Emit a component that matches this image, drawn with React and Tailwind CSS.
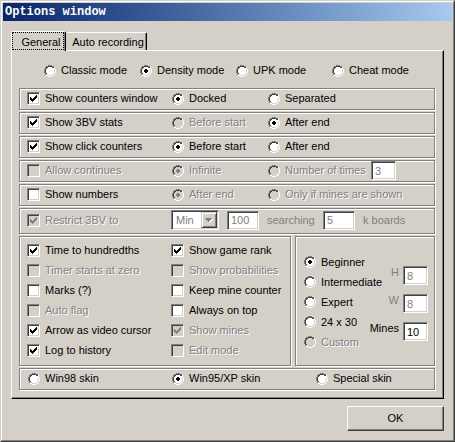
import React from "react";

const sunken =
  "border border-t-[#808080] border-l-[#808080] border-b-white border-r-white shadow-[inset_1px_1px_0_#404040,inset_-1px_-1px_0_#d4d0c8]";
const etched =
  "border border-[#808080] shadow-[1px_1px_0_#fff,inset_1px_1px_0_#fff]";
const embossed = "text-[#808080] [text-shadow:1px_1px_0_#fff]";

function CheckMark({ disabled }) {
  return (
    <svg
      aria-hidden="true"
      viewBox="0 0 13 13"
      shapeRendering="crispEdges"
      className="pointer-events-none invisible col-start-1 row-start-1 size-[13px] group-has-[:checked]:visible"
    >
      <path
        d="M3 5h1v3h-1zM4 6h1v3h-1zM5 7h1v3h-1zM6 6h1v3h-1zM7 5h1v3h-1zM8 4h1v3h-1zM9 3h1v3h-1z"
        fill={disabled ? "#808080" : "#000"}
      />
    </svg>
  );
}

function Check({ label, checked = false, disabled = false }) {
  return (
    <label className="flex items-center gap-[5px] whitespace-nowrap">
      <span className="group grid size-[13px] shrink-0">
        <input
          type="checkbox"
          defaultChecked={checked}
          disabled={disabled}
          className={`col-start-1 row-start-1 size-[13px] appearance-none bg-white disabled:bg-[#d4d0c8] ${sunken}`}
        />
        <CheckMark disabled={disabled} />
      </span>
      <span className={disabled ? embossed : ""}>{label}</span>
    </label>
  );
}

function Radio({ name, label, checked = false, disabled = false }) {
  return (
    <label className="flex items-center gap-[5px] whitespace-nowrap">
      <span className="group grid h-3 w-[13px] shrink-0 justify-end">
        <input
          type="radio"
          name={name}
          defaultChecked={checked}
          disabled={disabled}
          className="col-start-1 row-start-1 size-3 appearance-none"
        />
        <svg
          aria-hidden="true"
          viewBox="0 0 12 12"
          shapeRendering="crispEdges"
          className="pointer-events-none col-start-1 row-start-1 size-3"
        >
          <path
            d="M4 2h4v1h2v5h-1v1h-1v1h-4v-1h-1v-1h-1v-4h1v-1h1z"
            fill={disabled ? "#d4d0c8" : "#fff"}
          />
          <path
            d="M4 0h4v1h-4zM2 1h2v1h-2zM8 1h2v1h-2zM1 2h1v2h-1zM0 4h1v4h-1zM1 8h1v2h-1z"
            fill="#808080"
          />
          <path
            d="M4 1h4v1h-4zM2 2h2v1h-2zM8 2h2v1h-2zM2 3h1v1h-1zM1 4h1v4h-1zM2 8h1v1h-1z"
            fill="#404040"
          />
          <path
            d="M10 2h1v2h-1zM11 4h1v4h-1zM10 8h1v2h-1zM8 10h2v1h-2zM2 10h2v1h-2zM4 11h4v1h-4z"
            fill="#fff"
          />
          <path
            d="M5 4h2v1h1v2h-1v1h-2v-1h-1v-2h1z"
            fill={disabled ? "#808080" : "#000"}
            className="invisible group-has-[:checked]:visible"
          />
        </svg>
      </span>
      <span className={disabled ? embossed : ""}>{label}</span>
    </label>
  );
}

function Field({ label, value, disabled = false, className = "" }) {
  return (
    <input
      type="text"
      aria-label={label}
      defaultValue={value}
      disabled={disabled}
      className={`h-[19px] bg-white pl-[3px] text-black disabled:text-[#808080] ${sunken} ${className}`}
    />
  );
}

function Row({ children }) {
  return (
    <div className={`grid h-[22px] grid-cols-[144px_96px_1fr] items-center pb-px pl-[7px] ${etched}`}>
      {children}
    </div>
  );
}

export default function App() {
  return (
    <main className="w-full border border-t-[#d4d0c8] border-l-[#d4d0c8] border-r-[#404040] border-b-[#404040] bg-[#d4d0c8] font-['Liberation_Sans',Arial,sans-serif] text-[11px] leading-[13px] text-black">
      <div className="border border-t-white border-l-white border-r-[#808080] border-b-[#808080] p-px">
        <header className="h-[18px] bg-linear-to-r from-[#0a246a] to-[#a6caf0] pl-0.5">
          <h1 className="font-['Liberation_Mono',monospace] text-xs leading-[18px] font-bold text-white">
            Options window
          </h1>
        </header>

        <div className="px-2 pt-2.5 pb-2">
          <div role="tablist" className="flex items-end">
            <button
              type="button"
              role="tab"
              aria-selected="true"
              className="relative z-10 -mb-px h-5 w-[55px] rounded-t-[2px] border-t border-r border-l border-t-white border-r-black border-l-white bg-[#d4d0c8] pr-px pb-px shadow-[inset_-1px_0_0_#808080]"
            >
              <span className="block h-[18px] border border-dotted border-black pl-1.5 leading-[18px]">
                General
              </span>
            </button>
            <button
              type="button"
              role="tab"
              aria-selected="false"
              className="h-[18px] w-[81px] rounded-t-[2px] border-t border-r border-t-white border-r-black pl-1 leading-[18px] shadow-[inset_-1px_0_0_#808080]"
            >
              Auto recording
            </button>
          </div>

          <div
            role="tabpanel"
            className="border border-t-white border-r-black border-b-black border-l-white px-[7px] pt-[13px] pb-2 shadow-[inset_-1px_-1px_0_#808080]"
          >
            <div className="mb-[11px] grid grid-cols-[96px_96px_96px_1fr] pl-6">
              <Radio name="mode" label="Classic mode" />
              <Radio name="mode" label="Density mode" checked />
              <Radio name="mode" label="UPK mode" />
              <Radio name="mode" label="Cheat mode" />
            </div>

            <div className="flex flex-col gap-0.5 pr-px">
              <Row>
                <Check label="Show counters window" checked />
                <Radio name="counters" label="Docked" checked />
                <Radio name="counters" label="Separated" />
              </Row>
              <Row>
                <Check label="Show 3BV stats" checked />
                <Radio name="stats" label="Before start" disabled />
                <Radio name="stats" label="After end" checked />
              </Row>
              <Row>
                <Check label="Show click counters" checked />
                <Radio name="clicks" label="Before start" checked />
                <Radio name="clicks" label="After end" />
              </Row>
              <Row>
                <Check label="Allow continues" disabled />
                <Radio name="continues" label="Infinite" checked disabled />
                <div className="flex items-center">
                  <div className="w-[104px]">
                    <Radio name="continues" label="Number of times" disabled />
                  </div>
                  <Field label="Number of times" value="3" disabled className="w-[25px]" />
                </div>
              </Row>
              <Row>
                <Check label="Show numbers" />
                <Radio name="numbers" label="After end" checked disabled />
                <Radio name="numbers" label="Only if mines are shown" disabled />
              </Row>

              <div className={`flex h-[26px] items-center pb-0.5 pl-[7px] ${etched}`}>
                <div className="w-36">
                  <Check label="Restrict 3BV to" checked disabled />
                </div>
                <div className="grid w-12">
                  <select
                    aria-label="Restriction type"
                    disabled
                    className={`col-start-1 row-start-1 h-5 appearance-none bg-white pl-1 text-[#808080] disabled:opacity-100 ${sunken}`}
                  >
                    <option>Min</option>
                  </select>
                  <span className="pointer-events-none col-start-1 row-start-1 m-0.5 grid h-4 w-4 place-items-center justify-self-end border border-t-[#d4d0c8] border-r-[#404040] border-b-[#404040] border-l-[#d4d0c8] bg-[#d4d0c8] shadow-[inset_1px_1px_0_#fff,inset_-1px_-1px_0_#808080]">
                    <svg aria-hidden="true" viewBox="0 0 8 5" shapeRendering="crispEdges" className="h-[5px] w-2">
                      <path d="M1 1h7v1h-1v1h-1v1h-1v1h-1v-1h-1v-1h-1v-1h-1z" fill="#fff" />
                      <path d="M0 0h7v1h-1v1h-1v1h-1v1h-1v-1h-1v-1h-1v-1h-1z" fill="#808080" />
                    </svg>
                  </span>
                </div>
                <Field label="Restriction value" value="100" disabled className="ml-2 w-8" />
                <label htmlFor="boards" className="ml-2 w-14 text-[#808080]">
                  searching
                </label>
                <input
                  id="boards"
                  type="text"
                  defaultValue="5"
                  disabled
                  className={`h-[19px] w-8 bg-white pl-[3px] text-[#808080] ${sunken}`}
                />
                <span className="ml-2 whitespace-nowrap text-[#808080]">k boards</span>
              </div>

              <div className="grid grid-cols-[272px_minmax(0,1fr)] gap-1">
                <div className={`grid h-[130px] grid-cols-[144px_1fr] content-start pt-[3px] pl-[7px] ${etched}`}>
                  <div className="grid auto-rows-[20px]">
                    <Check label="Time to hundredths" checked />
                    <Check label="Timer starts at zero" disabled />
                    <Check label="Marks (?)" />
                    <Check label="Auto flag" disabled />
                    <Check label="Arrow as video cursor" checked />
                    <Check label="Log to history" checked />
                  </div>
                  <div className="grid auto-rows-[20px]">
                    <Check label="Show game rank" checked />
                    <Check label="Show probabilities" disabled />
                    <Check label="Keep mine counter" />
                    <Check label="Always on top" />
                    <Check label="Show mines" checked disabled />
                    <Check label="Edit mode" disabled />
                  </div>
                </div>

                <div className={`flex h-[130px] pr-1.5 pl-[7px] ${etched}`}>
                  <div className="grid min-w-0 flex-1 auto-rows-[20px] content-start pt-[15px]">
                    <Radio name="level" label="Beginner" checked />
                    <Radio name="level" label="Intermediate" />
                    <Radio name="level" label="Expert" />
                    <Radio name="level" label="24 x 30" />
                    <Radio name="level" label="Custom" disabled />
                  </div>
                  <div className="flex shrink-0 flex-col items-end gap-[9px] pt-[29px]">
                    <label className="flex gap-1 text-[#808080]">
                      H
                      <Field label="H" value="8" disabled className="w-[25px]" />
                    </label>
                    <label className="flex gap-1 text-[#808080]">
                      W
                      <Field label="W" value="8" disabled className="w-[25px]" />
                    </label>
                    <label className="flex gap-1">
                      Mines
                      <Field label="Mines" value="10" className="w-[25px]" />
                    </label>
                  </div>
                </div>
              </div>

              <div className={`grid h-[22px] grid-cols-[144px_144px_1fr] items-center pb-px pl-[7px] ${etched}`}>
                <Radio name="skin" label="Win98 skin" />
                <Radio name="skin" label="Win95/XP skin" checked />
                <Radio name="skin" label="Special skin" />
              </div>
            </div>
          </div>

          <div className="mt-[7px] flex justify-end">
            <button
              type="button"
              className="h-[25px] w-[97px] border border-t-white border-r-[#404040] border-b-[#404040] border-l-white bg-[#d4d0c8] shadow-[inset_-1px_-1px_0_#808080]"
            >
              OK
            </button>
          </div>
        </div>
      </div>
    </main>
  );
}
